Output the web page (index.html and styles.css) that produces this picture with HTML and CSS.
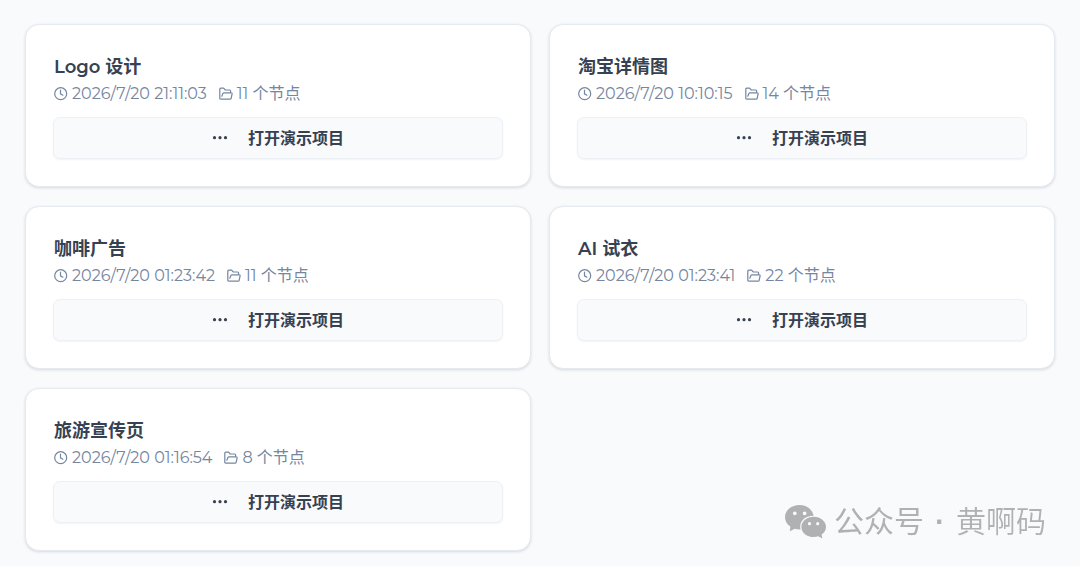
FILE: index.html
```html
<!DOCTYPE html>
<html lang="zh-CN">
<head>
    <meta charset="UTF-8">
    <meta name="viewport" content="width=device-width, initial-scale=1">
    <title>演示项目</title>
    <link rel="stylesheet" href="styles.css">
</head>
<body>

<!-- shared icons -->
<svg class="sprite" aria-hidden="true">
    <symbol id="clock" viewBox="0 0 14 14">
        <circle cx="6.7" cy="6.700" r="6"/>
        <path d="M6.5 3.200V6.900L8.900 8.200"/>
    </symbol>
    <symbol id="folder" viewBox="0 0 14 14">
        <path d="M2.200 12.200H1.800Q.8 12.200.8 11.200V2.200Q.8 1.200 1.800 1.200H4.600L6.300 3H10.600Q11.600 3 11.600 4V5.800M2.200 12.200H11.200Q11.900 12.200 12.100 11.500L13.100 6.900Q13.300 5.800 12.200 5.800H5Q4.200 5.800 3.900 6.600L2.800 9.200"/>
    </symbol>
    <symbol id="dots" viewBox="0 0 16 16">
        <circle cx="2.500" cy="8.700" r="1.600"/>
        <circle cx="8" cy="8.700" r="1.600"/>
        <circle cx="13.500" cy="8.700" r="1.600"/>
    </symbol>
</svg>

<main class="projects">
    <article class="card">
        <h2 class="title">Logo 设计</h2>
        <div class="meta">
            <span class="info"><svg class="icon"><use href="#clock"/></svg>2026/7/20 21:11:03</span>
            <span class="info"><svg class="icon"><use href="#folder"/></svg>11 个节点</span>
        </div>
        <button class="open" type="button"><svg class="dots"><use href="#dots"/></svg>打开演示项目</button>
    </article>

    <article class="card">
        <h2 class="title">淘宝详情图</h2>
        <div class="meta">
            <span class="info"><svg class="icon"><use href="#clock"/></svg>2026/7/20 10:10:15</span>
            <span class="info"><svg class="icon"><use href="#folder"/></svg>14 个节点</span>
        </div>
        <button class="open" type="button"><svg class="dots"><use href="#dots"/></svg>打开演示项目</button>
    </article>

    <article class="card">
        <h2 class="title">咖啡广告</h2>
        <div class="meta">
            <span class="info"><svg class="icon"><use href="#clock"/></svg>2026/7/20 01:23:42</span>
            <span class="info"><svg class="icon"><use href="#folder"/></svg>11 个节点</span>
        </div>
        <button class="open" type="button"><svg class="dots"><use href="#dots"/></svg>打开演示项目</button>
    </article>

    <article class="card">
        <h2 class="title">AI 试衣</h2>
        <div class="meta">
            <span class="info"><svg class="icon"><use href="#clock"/></svg>2026/7/20 01:23:41</span>
            <span class="info"><svg class="icon"><use href="#folder"/></svg>22 个节点</span>
        </div>
        <button class="open" type="button"><svg class="dots"><use href="#dots"/></svg>打开演示项目</button>
    </article>

    <article class="card">
        <h2 class="title">旅游宣传页</h2>
        <div class="meta">
            <span class="info"><svg class="icon"><use href="#clock"/></svg>2026/7/20 01:16:54</span>
            <span class="info"><svg class="icon"><use href="#folder"/></svg>8 个节点</span>
        </div>
        <button class="open" type="button"><svg class="dots"><use href="#dots"/></svg>打开演示项目</button>
    </article>
</main>

<div class="watermark">
    <svg class="wechat" viewBox="0 0 42 34" aria-hidden="true">
        <path fill-rule="evenodd" d="M14.5 0C6.5 0 0 5.400 0 12.200C0 16 2 19.300 5.300 21.600L4.800 26.300L9.800 23.700C11.600 24.200 13.400 24.500 15.600 24.400C15.300 23.400 15.200 22.600 15.200 21.700C15.200 15.400 21 10.700 28.700 10.800C27.500 4.600 21.800 0 14.500 0ZM9.800 6.400A1.900 1.900 0 1 1 9.800 10.200A1.900 1.900 0 1 1 9.800 6.400ZM19.600 6.400A1.900 1.900 0 1 1 19.600 10.200A1.900 1.900 0 1 1 19.600 6.400Z"/>
        <path fill-rule="evenodd" d="M28.700 11.800C21.900 11.800 16.400 16.300 16.400 21.900C16.400 27.500 21.900 32 28.700 32C30.300 32 31.800 31.700 33.200 31.300L37.400 33.600L36.600 29.500C39.400 27.700 41 25 41 21.900C41 16.300 35.500 11.800 28.700 11.800ZM24.500 17.100A1.600 1.600 0 1 1 24.500 20.300A1.600 1.600 0 1 1 24.500 17.100ZM32.700 17.100A1.600 1.600 0 1 1 32.700 20.300A1.600 1.600 0 1 1 32.700 17.100Z"/>
    </svg>
    <span>公众号</span>
    <span class="point">·</span>
    <span class="author">黄啊码</span>
</div>

</body>
</html>
```
FILE: styles.css
```css
* {
    box-sizing: border-box;
}

body {
    margin: 0;
    padding: 24px 25px 15px;
    background: #f9fafc;
    color: #364152;
    font-family: Montserrat, Inter, "Noto Sans CJK SC", sans-serif;
    font-size: 16px;
}

.sprite {
    display: none;
}

.projects {
    display: grid;
    grid-template-columns: repeat(2, minmax(0, 1fr));
    gap: 19px 18px;
}

.card {
    padding: 28px 27px 27px;
    background: #fff;
    border: 1px solid #e5eaf0;
    border-radius: 14px;
    box-shadow: 0 1px 3px rgba(15, 23, 42, .14);
}

.title {
    margin: 0;
    padding: 0 1px;
    font-size: 18px;
    font-weight: 600;
    line-height: 28px;
}

.meta {
    display: flex;
    gap: 12px;
    margin-bottom: 10px;
    padding: 0 1px;
    color: #7486a0;
    line-height: 26px;
}

.info {
    display: flex;
    align-items: center;
    gap: 4px;
    white-space: nowrap;
}

.icon {
    width: 14px;
    height: 14px;
    fill: none;
    stroke: currentColor;
    stroke-width: 1.2;
    stroke-linecap: round;
    stroke-linejoin: round;
}

.open {
    display: flex;
    align-items: center;
    justify-content: center;
    gap: 20px;
    width: 100%;
    height: 42px;
    padding: 0 0 2px;
    background: #f9fafc;
    border: 1px solid #edf1f6;
    border-radius: 7px;
    box-shadow: 0 1px 2px rgba(15, 23, 42, .05);
    color: inherit;
    font: inherit;
    font-weight: 600;
    cursor: pointer;
}

.dots {
    width: 16px;
    height: 16px;
    fill: currentColor;
}

/* account label over the bottom right corner */
.watermark {
    position: fixed;
    right: 34px;
    bottom: 24px;
    display: flex;
    align-items: center;
    color: #b0b1b3;
    font-family: "Liberation Sans", "Noto Sans CJK SC", sans-serif;
    font-size: 30px;
    line-height: 40px;
    pointer-events: none;
}

.wechat {
    width: 42px;
    height: 34px;
    margin-right: 7px;
    fill: currentColor;
}

.point {
    width: 32px;
    font-weight: 700;
    text-align: center;
}

.author {
    font-family: "Liberation Sans", "Noto Sans CJK SC DemiLight", "Noto Sans CJK SC", sans-serif;
    font-weight: 350;
}
```
